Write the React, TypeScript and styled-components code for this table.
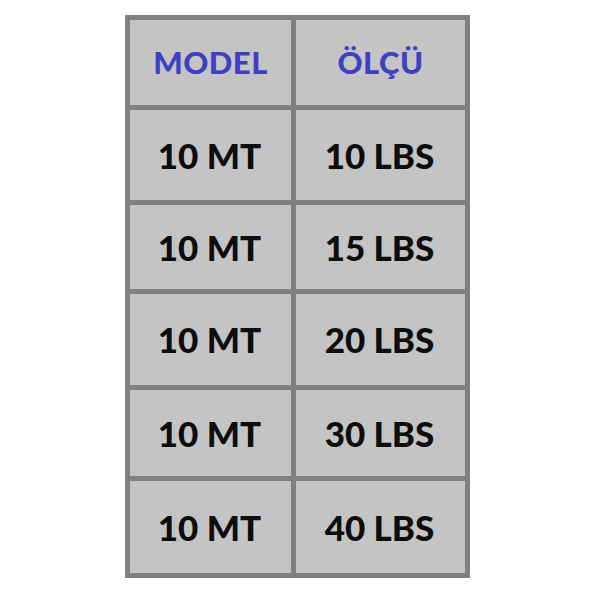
import React from "react";
import styled, { createGlobalStyle } from "styled-components";

const Global = createGlobalStyle`
  html, body { margin: 0; padding: 0; background: #ffffff; }
  body { font-family: "Lato", "Open Sans", sans-serif; }
`;

const Page = styled.div`
  width: 595px;
  height: 600px;
  padding: 15px 0 0 125px;
  box-sizing: border-box;
`;

const Table = styled.div`
  display: grid;
  grid-template-columns: 161px 169px;
  grid-template-rows: 85px 90px 84px 91px 86px 92px;
  gap: 5px;
  padding: 5px;
  width: max-content;
  background: #808080;
`;

const Cell = styled.div<{ $head?: boolean }>`
  background: #c4c4c4;
  display: flex;
  align-items: center;
  justify-content: center;
  padding-right: ${(p) => (p.$head ? "0" : "2px")};
  font-family: "Lato", "Open Sans", sans-serif;
  font-weight: 900;
  font-size: ${(p) => (p.$head ? "31px" : "35px")};
  letter-spacing: ${(p) => (p.$head ? "0.5px" : "0")};
  color: ${(p) => (p.$head ? "#3d3fc4" : "#0d0d0d")};
  line-height: 1;
`;

const rows: [string, string][] = [
  ["10 MT", "10 LBS"],
  ["10 MT", "15 LBS"],
  ["10 MT", "20 LBS"],
  ["10 MT", "30 LBS"],
  ["10 MT", "40 LBS"],
];

export default function App() {
  return (
    <>
      <Global />
      <Page>
        <Table>
          <Cell $head>MODEL</Cell>
          <Cell $head>ÖLÇÜ</Cell>
          {rows.map(([a, b], i) => (
            <React.Fragment key={i}>
              <Cell>{a}</Cell>
              <Cell>{b}</Cell>
            </React.Fragment>
          ))}
        </Table>
      </Page>
    </>
  );
}
